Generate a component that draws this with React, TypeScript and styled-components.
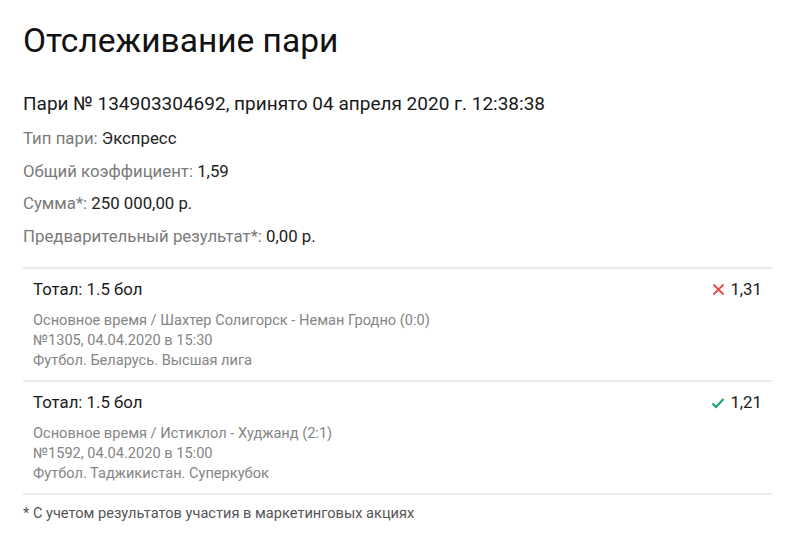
import React from 'react';
import styled, { createGlobalStyle } from 'styled-components';

const GlobalStyle = createGlobalStyle`
  html, body { margin: 0; padding: 0; background: #fff; }
  body { font-family: Roboto, "Noto Sans", Arial, sans-serif; color: #222; }
`;

type Outcome = 'lost' | 'won';

interface BetEvent {
  market: string;
  match: string;
  number: string;
  league: string;
  odds: string;
  outcome: Outcome;
}

const events: BetEvent[] = [
  {
    market: 'Тотал: 1.5 бол',
    match: 'Основное время / Шахтер Солигорск - Неман Гродно (0:0)',
    number: '№1305, 04.04.2020 в 15:30',
    league: 'Футбол. Беларусь. Высшая лига',
    odds: '1,31',
    outcome: 'lost',
  },
  {
    market: 'Тотал: 1.5 бол',
    match: 'Основное время / Истиклол - Худжанд (2:1)',
    number: '№1592, 04.04.2020 в 15:00',
    league: 'Футбол. Таджикистан. Суперкубок',
    odds: '1,21',
    outcome: 'won',
  },
];

const Page = styled.div`
  padding: 19px 28px 20px 23px;
`;

const Title = styled.h1`
  margin: 0;
  font-size: 33.5px;
  line-height: 43px;
  font-weight: 400;
  color: #111;
`;

const BetNumber = styled.div`
  margin-top: 30px;
  font-size: 19px;
  line-height: 24px;
  color: #1a1a1a;
`;

const InfoList = styled.div`
  margin-top: 6px;
  display: flex;
  flex-direction: column;
`;

const InfoRow = styled.div`
  font-size: 16.8px;
  line-height: 32.5px;
  color: #7a7a7a;
`;

const InfoValue = styled.span`
  color: #222;
`;

const Events = styled.div`
  margin-top: 15px;
  border-top: 2px solid #ececec;
`;

const EventRow = styled.div`
  display: flex;
  justify-content: space-between;
  align-items: flex-start;
  padding: 10px 10px 10px 10px;
  border-bottom: 2px solid #ececec;
`;

const EventBody = styled.div`
  display: flex;
  flex-direction: column;
`;

const Market = styled.div`
  font-size: 16.8px;
  line-height: 21px;
  color: #1a1a1a;
  margin-bottom: 10px;
`;

const Detail = styled.div`
  font-size: 14.6px;
  line-height: 20px;
  color: #858585;
`;

const Odds = styled.div`
  display: flex;
  align-items: center;
  gap: 5px;
  font-size: 16.8px;
  line-height: 21px;
  color: #222;
`;

const Footnote = styled.div`
  margin-top: 8px;
  font-size: 14.6px;
  line-height: 20px;
  color: #555;
`;

function OutcomeIcon({ outcome }: { outcome: Outcome }) {
  if (outcome === 'lost') {
    return (
      <svg width="13" height="13" viewBox="0 0 13 13">
        <path d="M1.5 1.5 L11.5 11.5 M11.5 1.5 L1.5 11.5" stroke="#f0474b" strokeWidth="1.8" fill="none" />
      </svg>
    );
  }
  return (
    <svg width="14" height="12" viewBox="0 0 14 12">
      <path d="M1.5 6.5 L5 10 L12.5 2" stroke="#14a06a" strokeWidth="2" fill="none" />
    </svg>
  );
}

export default function App() {
  return (
    <>
      <GlobalStyle />
      <Page>
        <Title>Отслеживание пари</Title>
        <BetNumber>Пари № 134903304692, принято 04 апреля 2020 г. 12:38:38</BetNumber>
        <InfoList>
          <InfoRow>Тип пари: <InfoValue>Экспресс</InfoValue></InfoRow>
          <InfoRow>Общий коэффициент: <InfoValue>1,59</InfoValue></InfoRow>
          <InfoRow>Сумма*: <InfoValue>250 000,00 р.</InfoValue></InfoRow>
          <InfoRow>Предварительный результат*: <InfoValue>0,00 р.</InfoValue></InfoRow>
        </InfoList>
        <Events>
          {events.map((ev, i) => (
            <EventRow key={i}>
              <EventBody>
                <Market>{ev.market}</Market>
                <Detail>{ev.match}</Detail>
                <Detail>{ev.number}</Detail>
                <Detail>{ev.league}</Detail>
              </EventBody>
              <Odds>
                <OutcomeIcon outcome={ev.outcome} />
                {ev.odds}
              </Odds>
            </EventRow>
          ))}
        </Events>
        <Footnote>* С учетом результатов участия в маркетинговых акциях</Footnote>
      </Page>
    </>
  );
}
